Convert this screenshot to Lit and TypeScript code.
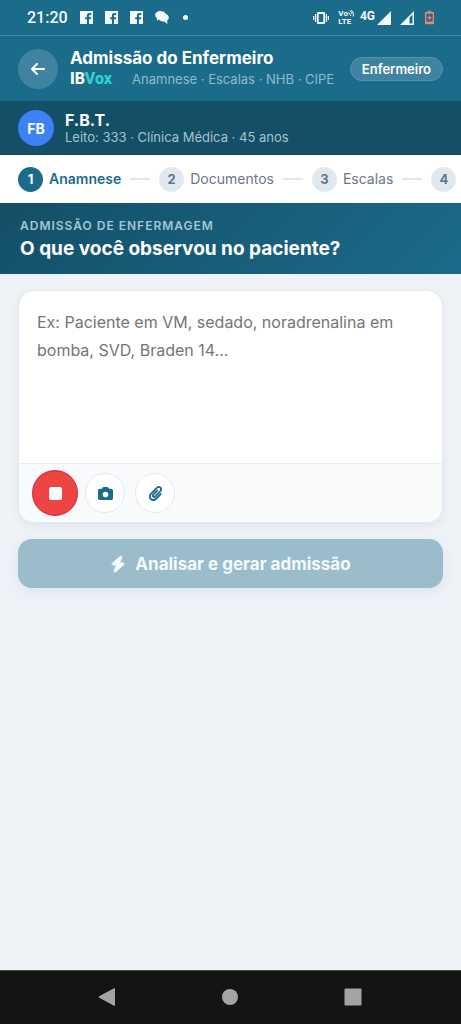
import { LitElement, html, css, svg, nothing } from "lit";
import { customElement, property, state } from "lit/decorators.js";
import { classMap } from "lit/directives/class-map.js";

type Glyph = { box: string; path: string };

const GLYPHS: Record<string, Glyph> = {
  back: {
    box: "0 0 448 512",
    path: "M9.4 233.4c-12.5 12.5-12.5 32.8 0 45.3l160 160c12.5 12.5 32.8 12.5 45.3 0s12.5-32.8 0-45.3L109.2 288 416 288c17.7 0 32-14.3 32-32s-14.3-32-32-32l-306.7 0L214.6 118.6c12.5-12.5 12.5-32.8 0-45.3s-32.8-12.5-45.3 0l-160 160z",
  },
  stop: {
    box: "0 0 384 512",
    path: "M0 128C0 92.7 28.7 64 64 64H320c35.3 0 64 28.7 64 64V384c0 35.3-28.7 64-64 64H64c-35.3 0-64-28.7-64-64V128z",
  },
  camera: {
    box: "0 0 512 512",
    path: "M149.1 64.8L138.7 96 64 96C28.7 96 0 124.7 0 160L0 416c0 35.3 28.7 64 64 64l384 0c35.3 0 64-28.7 64-64l0-256c0-35.3-28.7-64-64-64l-74.7 0L362.9 64.8C356.4 45.2 338.1 32 317.4 32L194.6 32c-20.7 0-39 13.2-45.5 32.8zM256 192a96 96 0 1 1 0 192 96 96 0 1 1 0-192z",
  },
  clip: {
    box: "0 0 448 512",
    path: "M43.246 466.142c-58.43-60.289-57.341-157.511 1.386-217.581L254.392 34c44.316-45.332 116.351-45.336 160.671 0 43.89 44.894 43.943 117.329 0 162.276L232.214 383.128c-29.855 30.537-78.633 30.111-107.982-.998-28.275-29.97-27.368-77.473 1.452-106.953l143.743-146.835c6.182-6.314 16.312-6.422 22.626-.241l22.861 22.379c6.315 6.182 6.422 16.312.241 22.626L171.427 319.927c-4.932 5.045-5.236 13.428-.648 18.292 4.372 4.634 11.245 4.711 15.688.165l182.849-186.851c19.613-20.062 19.613-52.725-.011-72.798-19.189-19.627-49.957-19.637-69.154 0L90.39 293.295c-34.763 35.56-35.299 93.12-1.191 128.313 34.01 35.093 88.985 35.137 123.058.286l172.06-175.999c6.177-6.319 16.307-6.433 22.626-.256l22.877 22.364c6.319 6.177 6.434 16.307.256 22.626l-172.06 175.998c-59.576 60.938-155.943 60.216-214.77-.485z",
  },
  bolt: {
    box: "0 0 448 512",
    path: "M349.4 44.6c5.9-13.7 1.5-29.7-10.6-38.5s-28.6-8-39.9 1.8l-256 224c-10 8.8-13.6 22.9-8.9 35.3S50.7 288 64 288l111.5 0L98.6 467.4c-5.9 13.7-1.5 29.7 10.6 38.5s28.6 8 39.9-1.8l256-224c10-8.8 13.6-22.9 8.900-35.3s-16.6-20.7-30-20.7l-111.5 0L349.4 44.6z",
  },
};

@customElement("ui-glyph")
class UiGlyph extends LitElement {
  @property() name = "";
  static styles = css`
    :host { display: inline-flex; width: 16px; height: 16px; }
    svg { width: 100%; height: 100%; fill: currentColor; display: block; overflow: visible; }
    .bolt { stroke: currentColor; stroke-width: 30; stroke-linejoin: round; }
  `;
  render() {
    const g = GLYPHS[this.name];
    return g
      ? html`<svg class=${this.name} viewBox=${g.box} aria-hidden="true">${svg`<path d=${g.path}></path>`}</svg>`
      : nothing;
  }
}

@customElement("status-bar")
class StatusBar extends LitElement {
  static styles = css`
    :host {
      display: flex; align-items: center; justify-content: space-between;
      box-sizing: border-box; height: 36px; padding: 0 27px;
      border-bottom: 1px solid #3f86a1; background: #1b6b8a; color: #f4fbff;
      font-family: Roboto, sans-serif;
    }
    .group { display: flex; align-items: center; }
    .left { gap: 12px; }
    .time { font-size: 16px; line-height: 20px; font-weight: 500; }
    .dot { width: 5px; height: 5px; border-radius: 50%; background: currentColor; margin-left: 2px; }
    svg { display: block; fill: currentColor; }
    .right { gap: 9px; }
    .volte { display: grid; font-size: 8px; line-height: 8px; font-weight: 700; }
    .vo { display: flex; align-items: center; }
    .waves { fill: none; stroke: currentColor; stroke-width: 1; }
    .cell { display: flex; align-items: flex-start; gap: 2px; margin-left: -3px; }
    .net { font-size: 12px; line-height: 10px; font-weight: 700; }
    .battery { color: #f0826a; margin-left: 2px; }
  `;
  private fb() {
    return html`<svg width="13" height="13" viewBox="0 0 13 13" aria-hidden="true">
      <path d="M0 0h13v13H9V8.200h1.900l.3-2H9V5c0-.7.300-1 1-1h1.200V2.100H9.600C7.700 2.100 6.900 3.200 6.900 4.700v1.500H5.200v2h1.700V13H0z"></path>
    </svg>`;
  }
  render() {
    return html`
      <div class="group left">
        <span class="time">21:20</span>
        ${this.fb()}${this.fb()}${this.fb()}
        <svg width="14" height="13" viewBox="0 0 14 13" aria-hidden="true">
          <path d="M5.500 0C2.400 0 .2 1.700.2 4c0 1.500.8 2.700 2 3.400L2 9.800l2-1.300C4.200 5.400 7 3 10.800 3 10 1.200 8 0 5.500 0z"></path>
          <path d="M8.500 2.500c3.100 0 5.300 1.700 5.300 4 0 1.300-.6 2.400-1.700 3.200L12.500 13 9.300 10.600c-3.800.2-6-1.700-6-4 0-2.400 2.200-4.100 5.200-4.100z"></path>
        </svg>
        <span class="dot"></span>
      </div>
      <div class="group right">
        <svg width="16" height="12" viewBox="0 0 16 12" aria-hidden="true">
          <path fill-rule="evenodd" d="M5 0h6a1 1 0 0 1 1 1v10a1 1 0 0 1-1 1H5a1 1 0 0 1-1-1V1a1 1 0 0 1 1-1zm.7 2v8h4.600V2zM2 2h1.300v8H2zM0 4h1.300v4H0zM12.700 2H14v8h-1.300zM14.700 4H16v4h-1.300z"></path>
        </svg>
        <span class="volte">
          <span class="vo">Vo<svg class="waves" width="6" height="7" viewBox="0 0 6 7" aria-hidden="true"><path d="M.5 2.500 3 6M1.500 1C3.500 1 4 3 3.800 4M3 .5C5 .8 5.600 3 5.300 6.500"></path></svg></span>
          <span>LTE</span>
        </span>
        <span class="cell">
          <span class="net">4G</span>
          <svg width="14" height="14" viewBox="0 0 14 14" aria-hidden="true"><path d="M14 0v14H0z"></path></svg>
        </span>
        <svg width="14" height="14" viewBox="0 0 14 14" aria-hidden="true">
          <path fill-rule="evenodd" d="M14 0v14H0zM9.500 6.500v6h3V3.500z"></path>
        </svg>
        <svg class="battery" width="9" height="15" viewBox="0 0 10 15" aria-hidden="true">
          <path fill-rule="evenodd" d="M3 0h4v1.500h2.200c.4 0 .8.400.8.800v11.900c0 .4-.4.800-.8.800H.8c-.4 0-.8-.4-.8-.8V2.300c0-.4.4-.8.8-.8H3zM1.500 3.200v8.800h7V3.200z"></path>
          <path d="M4.300 5.200h1.400v1.800h1.800v1.400H5.700v1.800H4.300V8.400H2.500V7h1.800z"></path>
        </svg>
      </div>
    `;
  }
}

@customElement("nav-bar")
class NavBar extends LitElement {
  static styles = css`
    :host {
      display: flex; justify-content: space-around; align-items: center;
      box-sizing: border-box; height: 54px; padding: 0 46px 1px 45px;
      background: #141414; border-top: 1px solid #4a4c4e;
    }
    button { display: grid; place-items: center; width: 40px; height: 40px; padding: 0; border: 0; background: none; }
    svg { display: block; fill: #a3a3a3; }
  `;
  render() {
    return html`
      <button aria-label="Voltar"><svg width="18" height="18" viewBox="0 0 18 18"><path d="M16 .3 1.200 8.300a.8.8 0 0 0 0 1.400L16 17.700c.5.3 1 0 1-.5V.8c0-.5-.5-.8-1-.5z"></path></svg></button>
      <button aria-label="Início"><svg width="18" height="18" viewBox="0 0 18 18"><circle cx="9" cy="9" r="8"></circle></svg></button>
      <button aria-label="Recentes"><svg width="18" height="18" viewBox="0 0 18 18"><rect x=".5" y=".5" width="17" height="17" rx="1"></rect></svg></button>
    `;
  }
}

@customElement("app-root")
class AppRoot extends LitElement {
  @state() private current = 0;
  @state() private notes = "";

  private steps = ["Anamnese", "Documentos", "Escalas", ""];

  static styles = css`
    :host {
      display: flex; flex-direction: column; min-height: 100vh;
      background: #eff3f8; color: #fff; font-family: Inter, sans-serif;
    }
    * { box-sizing: border-box; }
    button { font: inherit; padding: 0; cursor: pointer; }
    h1, h2, p, ol { margin: 0; padding: 0; }

    .header { display: flex; align-items: center; gap: 12px; height: 65px; padding: 0 18px; background: #1b6b8a; }
    .back {
      display: grid; place-items: center; flex: none; width: 40px; height: 40px;
      border: 0; border-radius: 50%; background: #3f83a0; color: #fff;
    }
    .titles { flex: 1; min-width: 0; }
    .title { font-size: 17px; line-height: 21px; font-weight: 700; white-space: nowrap; }
    .sub { display: flex; align-items: center; gap: 20px; line-height: 20px; white-space: nowrap; }
    .brand { font-family: Roboto, sans-serif; font-size: 16px; font-weight: 800; }
    .brand-accent { color: #2dd4cf; }
    .crumbs { font-size: 13px; color: #8fbccd; }
    .role {
      display: grid; place-items: center; flex: none; height: 24px; padding: 0 11px;
      border: 1px solid #5493ab; border-radius: 12px; background: #3f83a0;
      font-size: 13px; font-weight: 600; line-height: 16px;
    }

    .patient { display: flex; align-items: center; gap: 11px; height: 54px; padding: 0 18px; background: #134f67; }
    .avatar {
      display: grid; place-items: center; flex: none; width: 36px; height: 36px;
      border-radius: 50%; background: #3b82f6; font-size: 14px; font-weight: 700;
    }
    .name { font-size: 16px; line-height: 18px; font-weight: 700; }
    .detail { font-size: 13px; line-height: 16px; color: #a5c3ce; }

    .steps {
      display: flex; align-items: center; gap: 9px; height: 48px; padding: 0 18px;
      overflow: hidden; background: #fff; list-style: none;
    }
    .step { display: flex; align-items: center; gap: 9px; flex: none; }
    .step-link { display: flex; align-items: center; gap: 6px; border: 0; background: none; color: #6b7788; font-size: 14px; line-height: 20px; }
    .num {
      display: grid; place-items: center; width: 25px; height: 25px; border-radius: 50%;
      background: #e2e8f0; color: #64748b; font-size: 13px; font-weight: 700;
    }
    .step-link.on { color: #1b6b8a; font-weight: 600; }
    .on .num { background: #1b6b8a; color: #fff; }
    .rule { width: 20px; height: 2px; background: #dfe6ee; }

    .banner { height: 71px; padding: 13px 20px; background: linear-gradient(135deg, #134f67, #1b6b8a); }
    .eyebrow { font-size: 12px; line-height: 20px; font-weight: 600; letter-spacing: 1px; color: #a3c6d3; text-transform: uppercase; }
    .question { font-size: 19px; line-height: 26px; font-weight: 700; }

    .content { flex: 1; display: flex; flex-direction: column; gap: 16px; padding: 16px 18px; }
    .card {
      overflow: hidden; border: 1px solid #e4eaf1; border-radius: 16px; background: #fff;
      box-shadow: 0 3px 10px rgba(30, 60, 100, 0.08);
    }
    .notes {
      display: block; width: 100%; height: 172px; padding: 17px 18px; border: 0; outline: 0;
      resize: none; background: none; color: #1e293b;
      font-family: inherit; font-size: 16px; line-height: 28px;
    }
    .notes::placeholder { color: #757575; opacity: 1; }
    .tools { display: flex; align-items: center; gap: 10px; height: 59px; padding: 0 16px; border-top: 1px solid #e9eef3; background: #f8fafc; }
    .tool {
      display: grid; place-items: center; width: 40px; height: 40px; border-radius: 50%;
      border: 1px solid #e2e8f0; background: #fff; color: #1b6b8a;
    }
    .tool ui-glyph { width: 15px; height: 15px; }
    .tool.live { border-color: #cf3440; background: #ef4444; color: #fff; transform: scale(1.15); }
    .submit {
      display: flex; align-items: center; justify-content: center; gap: 9px; height: 49px;
      border: 0; border-radius: 14px; background: #9abccb; color: #f5fafc;
      font-size: 17px; line-height: 20px; font-weight: 700;
      box-shadow: 0 4px 14px rgba(27, 107, 138, 0.1);
    }
  `;

  render() {
    return html`
      <status-bar></status-bar>
      <header class="header">
        <button class="back" aria-label="Voltar"><ui-glyph name="back"></ui-glyph></button>
        <div class="titles">
          <h1 class="title">Admissão do Enfermeiro</h1>
          <div class="sub">
            <span class="brand">IB<span class="brand-accent">Vox</span></span>
            <span class="crumbs">Anamnese · Escalas · NHB · CIPE</span>
          </div>
        </div>
        <span class="role">Enfermeiro</span>
      </header>
      <section class="patient">
        <span class="avatar">FB</span>
        <div>
          <p class="name">F.B.T.</p>
          <p class="detail">Leito: 333 · Clínica Médica · 45 anos</p>
        </div>
      </section>
      <ol class="steps">
        ${this.steps.map(
          (label, i) => html`<li class="step">
            ${i > 0 ? html`<span class="rule"></span>` : nothing}
            <button
              class=${classMap({ "step-link": true, on: i === this.current })}
              @click=${() => (this.current = i)}
            ><span class="num">${i + 1}</span>${label ? html`<span>${label}</span>` : nothing}</button>
          </li>`
        )}
      </ol>
      <section class="banner">
        <p class="eyebrow">Admissão de Enfermagem</p>
        <h2 class="question"><label for="notes">O que você observou no paciente?</label></h2>
      </section>
      <main class="content">
        <div class="card">
          <textarea
            id="notes"
            class="notes"
            placeholder="Ex: Paciente em VM, sedado, noradrenalina em bomba, SVD, Braden 14..."
            .value=${this.notes}
            @input=${(e: Event) => (this.notes = (e.target as HTMLTextAreaElement).value)}
          ></textarea>
          <div class="tools">
            <button class="tool live" aria-label="Parar gravação"><ui-glyph name="stop"></ui-glyph></button>
            <button class="tool" aria-label="Foto"><ui-glyph name="camera"></ui-glyph></button>
            <button class="tool" aria-label="Anexar"><ui-glyph name="clip"></ui-glyph></button>
          </div>
        </div>
        <button class="submit"><ui-glyph name="bolt"></ui-glyph>Analisar e gerar admissão</button>
      </main>
      <nav-bar></nav-bar>
    `;
  }
}
